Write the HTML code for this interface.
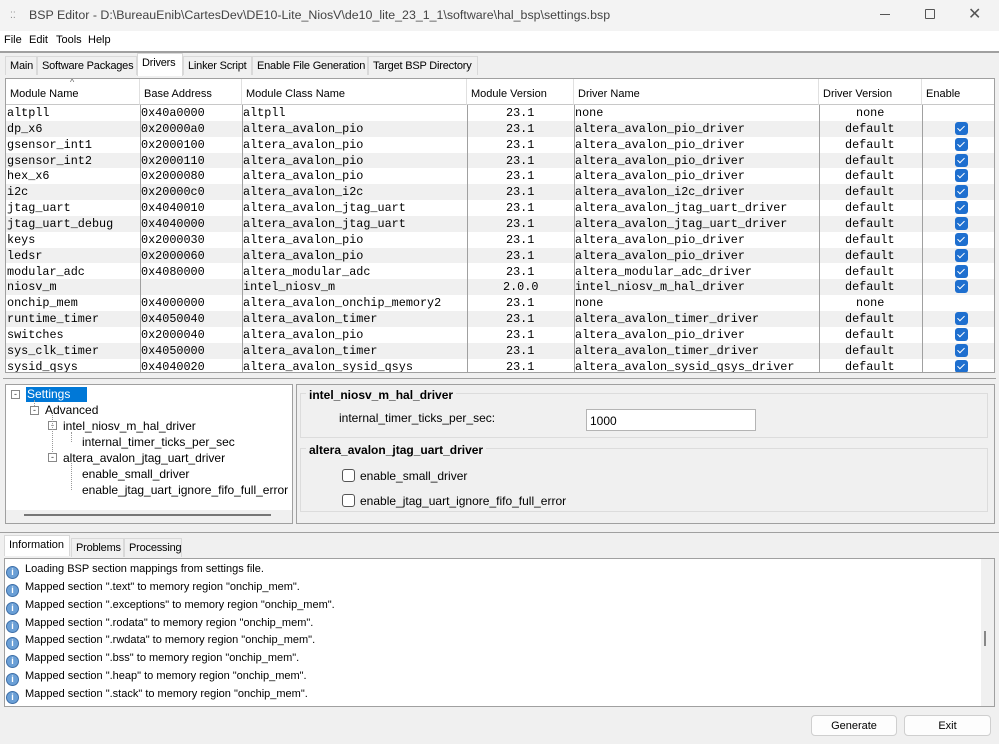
<!DOCTYPE html>
<html><head><meta charset="utf-8"><style>
*{box-sizing:border-box;margin:0;padding:0}
body{width:999px;height:744px;overflow:hidden;background:#f0f0f0;font-family:"Liberation Sans",sans-serif;font-size:12px;color:#000;position:relative}
.a{position:absolute}
.title{left:0;top:0;width:999px;height:31px;background:#f3f3f3}
.menu{left:0;top:31px;width:999px;height:20px;background:#fff}
.tab{position:absolute;top:56px;height:19px;border:1px solid #d9d9d9;border-bottom:none;background:#f0f0f0;padding:3px 0 0 4px;font-size:11px;white-space:nowrap;overflow:hidden;letter-spacing:-0.2px}
.tbl{left:5px;top:78px;width:990px;height:295px;border:1px solid #a0a0a0;background:#fff;overflow:hidden}
.hd{position:absolute;top:0;height:26px;border-right:1px solid #e0e0e0;border-bottom:1px solid #c8c8c8;background:#fff;padding:9px 0 0 4px;font-size:11px}
.row{position:absolute;left:0;width:988px;height:15.85px;font-family:"Liberation Mono",monospace;font-size:11.8px;line-height:17px}
.row span{position:absolute;top:0;white-space:nowrap}
.g{background:#f0f0f0}
.vl{position:absolute;top:26px;bottom:0;width:1px;background:#a0a0a0}
.cb{position:absolute;left:949px;top:1px;width:13px;height:13px;border-radius:3px;background:#1e6fcf}
.cb:after{content:"";position:absolute;left:4px;top:2px;width:3px;height:6px;border:solid #fff;border-width:0 1.3px 1.3px 0;transform:rotate(45deg)}
.log{font-size:11px;position:absolute;left:6px;height:18px;white-space:nowrap;line-height:14px}
.ic{display:inline-block;width:13px;height:13px;border-radius:50%;background:#6a9fd6;border:1px solid #3e6fa8;vertical-align:-3px;margin-right:6px;color:#fff;font-size:9px;text-align:center;line-height:11px;font-weight:bold}
.btn{position:absolute;top:715px;height:21px;border:1px solid #cfcfcf;border-radius:4px;background:#fdfdfd;text-align:center;font-size:11px;line-height:20px}
</style></head><body>
<div class="a title"></div>
<div class="a" style="left:10px;top:10px;font-size:9px;color:#888">⁚⁚</div>
<div class="a" style="left:29px;top:8px;font-size:12.4px;color:#444">BSP Editor - D:\BureauEnib\CartesDev\DE10-Lite_NiosV\de10_lite_23_1_1\software\hal_bsp\settings.bsp</div>
<div class="a" style="left:880px;top:14px;width:10px;height:1px;background:#555"></div>
<div class="a" style="left:925px;top:9px;width:10px;height:10px;border:1px solid #555;border-radius:1px"></div>
<div class="a" style="left:968px;top:4px;font-size:16px;color:#555">✕</div>
<div class="a menu"></div>
<div class="a" style="left:4px;top:34px;font-size:11px"><span>File</span><span style="position:absolute;left:25px">Edit</span><span style="position:absolute;left:52px">Tools</span><span style="position:absolute;left:84px">Help</span></div>
<div class="a" style="left:0;top:51px;width:999px;height:2px;background:#a0a0a0"></div>
<div class="tab" style="left:5px;width:32px">Main</div>
<div class="tab" style="left:37px;width:100px">Software Packages</div>
<div class="tab" style="left:137px;width:46px;top:53px;height:23px;background:#fff">Drivers</div>
<div class="tab" style="left:183px;width:69px">Linker Script</div>
<div class="tab" style="left:252px;width:116px">Enable File Generation</div>
<div class="tab" style="left:368px;width:110px">Target BSP Directory</div>

<div class="a tbl">
<div class="hd" style="left:0;width:134px">Module Name</div>
<div class="a" style="left:64px;top:-2px;font-size:9px;color:#666">^</div>
<div class="hd" style="left:134px;width:102px">Base Address</div>
<div class="hd" style="left:236px;width:225px">Module Class Name</div>
<div class="hd" style="left:461px;width:107px">Module Version</div>
<div class="hd" style="left:568px;width:245px">Driver Name</div>
<div class="hd" style="left:813px;width:103px">Driver Version</div>
<div class="hd" style="left:916px;width:74px">Enable</div>
<div id="rows"></div>
<div class="vl" style="left:134px"></div><div class="vl" style="left:236px"></div><div class="vl" style="left:461px"></div><div class="vl" style="left:568px"></div><div class="vl" style="left:813px"></div><div class="vl" style="left:916px"></div>
</div>
<script>
var d=[["altpll","0x40a0000","altpll","23.1","none","none",0],
["dp_x6","0x20000a0","altera_avalon_pio","23.1","altera_avalon_pio_driver","default",1],
["gsensor_int1","0x2000100","altera_avalon_pio","23.1","altera_avalon_pio_driver","default",1],
["gsensor_int2","0x2000110","altera_avalon_pio","23.1","altera_avalon_pio_driver","default",1],
["hex_x6","0x2000080","altera_avalon_pio","23.1","altera_avalon_pio_driver","default",1],
["i2c","0x20000c0","altera_avalon_i2c","23.1","altera_avalon_i2c_driver","default",1],
["jtag_uart","0x4040010","altera_avalon_jtag_uart","23.1","altera_avalon_jtag_uart_driver","default",1],
["jtag_uart_debug","0x4040000","altera_avalon_jtag_uart","23.1","altera_avalon_jtag_uart_driver","default",1],
["keys","0x2000030","altera_avalon_pio","23.1","altera_avalon_pio_driver","default",1],
["ledsr","0x2000060","altera_avalon_pio","23.1","altera_avalon_pio_driver","default",1],
["modular_adc","0x4080000","altera_modular_adc","23.1","altera_modular_adc_driver","default",1],
["niosv_m","","intel_niosv_m","2.0.0","intel_niosv_m_hal_driver","default",1],
["onchip_mem","0x4000000","altera_avalon_onchip_memory2","23.1","none","none",0],
["runtime_timer","0x4050040","altera_avalon_timer","23.1","altera_avalon_timer_driver","default",1],
["switches","0x2000040","altera_avalon_pio","23.1","altera_avalon_pio_driver","default",1],
["sys_clk_timer","0x4050000","altera_avalon_timer","23.1","altera_avalon_timer_driver","default",1],
["sysid_qsys","0x4040020","altera_avalon_sysid_qsys","23.1","altera_avalon_sysid_qsys_driver","default",1]];
var h="";d.forEach(function(r,i){h+='<div class="row'+(i%2?' g':'')+'" style="top:'+(26+i*15.85)+'px"><span style="left:1px">'+r[0]+'</span><span style="left:135px">'+r[1]+'</span><span style="left:237px">'+r[2]+'</span><span style="left:'+(r[3].length>4?497:500)+'px">'+r[3]+'</span><span style="left:569px">'+r[4]+'</span><span style="left:'+(r[5]=="none"?850:839)+'px">'+r[5]+'</span>'+(r[6]?'<i class="cb"></i>':'')+'</div>'});
document.getElementById("rows").innerHTML=h;
</script>
<div class="a" style="left:3px;top:378px;width:993px;height:1px;background:#a0a0a0"></div>
<!-- tree -->
<div class="a" style="left:5px;top:384px;width:288px;height:140px;border:1px solid #a0a0a0;background:#fff"></div>
<div class="a" style="left:6px;top:510px;width:286px;height:13px;background:#f0f0f0"></div>
<div class="a" style="left:24px;top:514px;width:247px;height:2px;background:#777"></div>
<div class="a" style="left:26px;top:387px;width:61px;height:15px;background:#0078d7;color:#fff;padding-left:1px;font-size:12px;line-height:15px">Settings</div>
<div class="a" style="left:11px;top:390px;width:9px;height:9px;border:1px solid #888;font-size:9px;line-height:6px;text-align:center;color:#333">-</div>
<div class="a" style="left:30px;top:406px;width:9px;height:9px;border:1px solid #888;font-size:9px;line-height:6px;text-align:center;color:#333">-</div>
<div class="a" style="left:48px;top:421px;width:9px;height:9px;border:1px solid #888;font-size:9px;line-height:6px;text-align:center;color:#333">-</div>
<div class="a" style="left:48px;top:453px;width:9px;height:9px;border:1px solid #888;font-size:9px;line-height:6px;text-align:center;color:#333">-</div>
<div class="a" style="left:34px;top:400px;width:0;height:6px;border-left:1px dotted #999"></div>
<div class="a" style="left:52px;top:415px;width:0;height:39px;border-left:1px dotted #999"></div>
<div class="a" style="left:71px;top:432px;width:0;height:10px;border-left:1px dotted #999"></div>
<div class="a" style="left:71px;top:463px;width:0;height:27px;border-left:1px dotted #999"></div>
<div class="a" style="left:45px;top:403px;font-size:12px">Advanced</div>
<div class="a" style="left:63px;top:419px;font-size:12px">intel_niosv_m_hal_driver</div>
<div class="a" style="left:82px;top:435px;font-size:12px">internal_timer_ticks_per_sec</div>
<div class="a" style="left:63px;top:451px;font-size:12px">altera_avalon_jtag_uart_driver</div>
<div class="a" style="left:82px;top:467px;font-size:12px">enable_small_driver</div>
<div class="a" style="left:82px;top:483px;font-size:12px;width:209px;overflow:hidden;white-space:nowrap">enable_jtag_uart_ignore_fifo_full_error</div>
<!-- right -->
<div class="a" style="left:296px;top:384px;width:699px;height:140px;border:1px solid #a0a0a0"></div>
<div class="a" style="left:300px;top:393px;width:688px;height:45px;border:1px solid #dcdcdc"></div>
<div class="a" style="left:306px;top:388px;background:#f0f0f0;padding:0 3px;font-weight:bold;font-size:12px">intel_niosv_m_hal_driver</div>
<div class="a" style="left:339px;top:411px;font-size:12px">internal_timer_ticks_per_sec:</div>
<div class="a" style="left:586px;top:409px;width:170px;height:22px;border:1px solid #b4b4b4;background:#fff;padding:4px 3px;font-size:12px">1000</div>
<div class="a" style="left:300px;top:448px;width:688px;height:64px;border:1px solid #dcdcdc"></div>
<div class="a" style="left:306px;top:443px;background:#f0f0f0;padding:0 3px;font-weight:bold;font-size:12px">altera_avalon_jtag_uart_driver</div>
<div class="a" style="left:342px;top:469px;width:13px;height:13px;border:1px solid #555;border-radius:3px;background:#fff"></div>
<div class="a" style="left:360px;top:469px;font-size:12px">enable_small_driver</div>
<div class="a" style="left:342px;top:494px;width:13px;height:13px;border:1px solid #555;border-radius:3px;background:#fff"></div>
<div class="a" style="left:360px;top:494px;font-size:12px">enable_jtag_uart_ignore_fifo_full_error</div>
<div class="a" style="left:0;top:532px;width:999px;height:1px;background:#a0a0a0"></div>
<!-- info tabs -->
<div class="a" style="left:4px;top:535px;width:66px;height:21px;background:#fff;border:1px solid #d9d9d9;border-bottom:none;font-size:11px;padding:3px 4px">Information</div>
<div class="tab" style="left:71px;top:538px;width:53px;font-size:11px">Problems</div>
<div class="tab" style="left:124px;top:538px;width:58px;font-size:11px">Processing</div>
<div class="a" style="left:4px;top:558px;width:991px;height:149px;border:1px solid #a0a0a0;background:#fff"></div>
<div class="a" style="left:981px;top:559px;width:13px;height:147px;background:#f0f0f0"></div>
<div class="a" style="left:984px;top:631px;width:2px;height:15px;background:#888"></div>
<div class="log" style="top:562px"><span class="ic">i</span>Loading BSP section mappings from settings file.</div>
<div class="log" style="top:580px"><span class="ic">i</span>Mapped section ".text" to memory region "onchip_mem".</div>
<div class="log" style="top:598px"><span class="ic">i</span>Mapped section ".exceptions" to memory region "onchip_mem".</div>
<div class="log" style="top:616px"><span class="ic">i</span>Mapped section ".rodata" to memory region "onchip_mem".</div>
<div class="log" style="top:633px"><span class="ic">i</span>Mapped section ".rwdata" to memory region "onchip_mem".</div>
<div class="log" style="top:651px"><span class="ic">i</span>Mapped section ".bss" to memory region "onchip_mem".</div>
<div class="log" style="top:669px"><span class="ic">i</span>Mapped section ".heap" to memory region "onchip_mem".</div>
<div class="log" style="top:687px"><span class="ic">i</span>Mapped section ".stack" to memory region "onchip_mem".</div>
<div class="btn" style="left:811px;width:86px">Generate</div>
<div class="btn" style="left:904px;width:87px">Exit</div>
</body></html>
